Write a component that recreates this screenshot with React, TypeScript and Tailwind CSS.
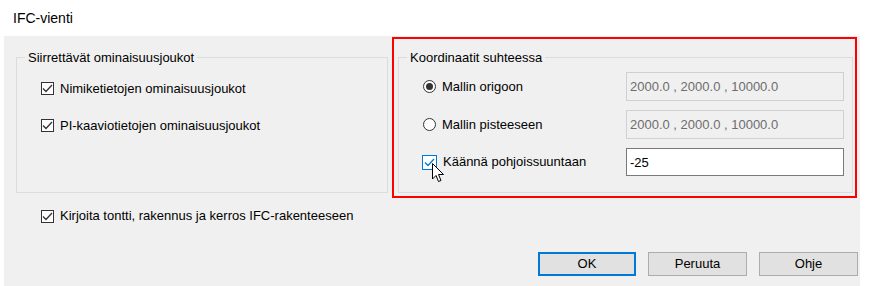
import React from "react"

const font = { fontFamily: '"Liberation Sans", Arial, sans-serif' }

function CheckBox({ label, hot }: { label: string; hot?: boolean }) {
    return (
        <div className="flex items-center gap-[6px]">
            <div className="relative">
                <div
                    className={
                        hot
                            ? "w-[15px] h-[15px] border border-[#0078d7] bg-white flex items-center justify-center"
                            : "w-[13px] h-[13px] border border-[#333333] bg-white flex items-center justify-center"
                    }
                >
                    <svg width="11" height="9" viewBox="0 0 11 9">
                        <path d="M1 4.5 L4 7.5 L10 1" fill="none" stroke={hot ? "#0078d7" : "#333333"} strokeWidth="1.3" />
                    </svg>
                </div>
                {hot && (
                    <svg className="absolute left-[10px] top-[8px]" width="13" height="20" viewBox="0 0 13 20">
                        <path d="M0.5 0.5 L0.5 16 L4 12.5 L6.5 18.5 L9 17.5 L6.5 11.5 L11.5 11.5 Z" fill="#ffffff" stroke="#000000" strokeWidth="1" strokeLinejoin="miter" />
                    </svg>
                )}
            </div>
            <span className="text-[13px] text-black">{label}</span>
        </div>
    )
}

function Radio({ label, checked }: { label: string; checked?: boolean }) {
    return (
        <div className="flex items-center gap-[6px]">
            <div className="w-[13px] h-[13px] rounded-full border border-[#333333] bg-white flex items-center justify-center">
                {checked && <div className="w-[7px] h-[7px] rounded-full bg-[#333333]" />}
            </div>
            <span className="text-[13px] text-black">{label}</span>
        </div>
    )
}

function Field({ value, disabled }: { value: string; disabled?: boolean }) {
    return (
        <div
            className={
                disabled
                    ? "w-[218px] h-[29px] border border-[#d0d0d0] bg-[#f0f0f0] text-[#6d6d6d] text-[13px] px-[3px] pt-[4px]"
                    : "w-[218px] h-[28px] border border-[#7a7a7a] bg-white text-black text-[13px] px-[3px] pt-[4px]"
            }
        >
            {value}
        </div>
    )
}

function Button({ label, primary }: { label: string; primary?: boolean }) {
    return (
        <div
            className={
                primary
                    ? "w-[98px] h-[24px] border-2 border-[#0078d7] bg-[#e1e1e1] flex items-center justify-center text-[13px] text-black"
                    : "w-[99px] h-[24px] border border-[#adadad] bg-[#e1e1e1] flex items-center justify-center text-[13px] text-black"
            }
        >
            {label}
        </div>
    )
}

export default function App() {
    return (
        <div className="w-[870px] h-[286px] bg-white flex flex-col overflow-hidden" style={font}>
            <div className="h-[36px] flex items-center pl-[13px] text-[14px] text-black">IFC-vienti</div>

            <div className="ml-[4px] w-[856px] flex-1 bg-[#f0f0f0] flex flex-col pl-[12px] pt-[14px]">
                <div className="flex items-start">
                    <fieldset className="w-[372px] h-[143px] border border-[#dcdcdc]">
                        <legend className="ml-[8px] px-[3px] text-[13px] leading-[15px] text-black">Siirrettävät ominaisuusjoukot</legend>
                        <div className="flex flex-col pl-[24px] pt-[9px]">
                            <div className="h-[29px] flex items-center"><CheckBox label="Nimiketietojen ominaisuusjoukot" /></div>
                            <div className="h-[29px] mt-[8px] flex items-center"><CheckBox label="PI-kaaviotietojen ominaisuusjoukot" /></div>
                        </div>
                    </fieldset>

                    <div className="relative ml-[10px]">
                        <fieldset className="w-[455px] h-[143px] border border-[#dcdcdc]">
                            <legend className="ml-[8px] px-[3px] text-[13px] leading-[15px] text-black">Koordinaatit suhteessa</legend>
                            <div className="flex flex-col gap-[9px] pl-[24px] pr-[8px] pt-[7px]">
                                <div className="flex items-center justify-between">
                                    <Radio label="Mallin origoon" checked />
                                    <Field value="2000.0 , 2000.0 , 10000.0" disabled />
                                </div>
                                <div className="flex items-center justify-between">
                                    <Radio label="Mallin pisteeseen" />
                                    <Field value="2000.0 , 2000.0 , 10000.0" disabled />
                                </div>
                                <div className="flex items-center justify-between">
                                    <div className="-ml-[1px]"><CheckBox label="Käännä pohjoissuuntaan" hot /></div>
                                    <Field value="-25" />
                                </div>
                            </div>
                        </fieldset>
                        <div className="absolute left-[-6px] top-[-13px] w-[465px] h-[161px] border-2 border-[#ff0000] pointer-events-none" />
                    </div>
                </div>

                <div className="mt-[15px] pl-[25px] h-[16px] flex items-center">
                    <CheckBox label="Kirjoita tontti, rakennus ja kerros IFC-rakenteeseen" />
                </div>

                <div className="mt-[28px] flex justify-end gap-[12px] pr-[2px]">
                    <Button label="OK" primary />
                    <Button label="Peruuta" />
                    <Button label="Ohje" />
                </div>
            </div>
        </div>
    )
}
